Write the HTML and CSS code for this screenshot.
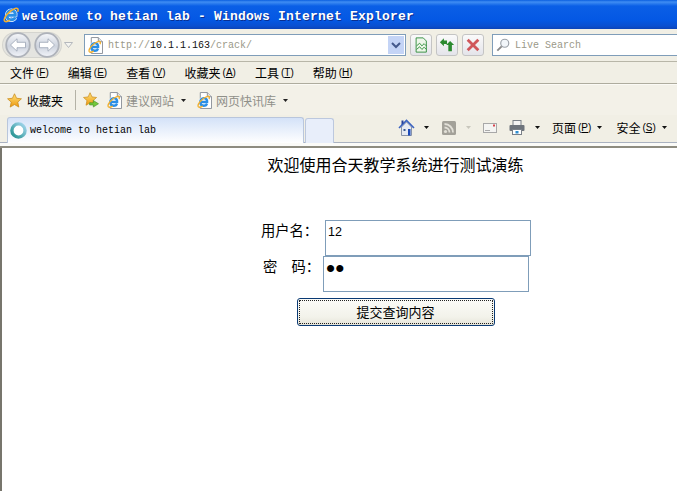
FILE: index.html
```html
<!DOCTYPE html>
<html lang="zh">
<head>
<meta charset="utf-8">
<title>welcome to hetian lab</title>
<link rel="stylesheet" href="styles.css">
</head>
<body>
<svg class="defs" width="0" height="0" aria-hidden="true">
  <defs>
    <linearGradient id="glass" x1="0" y1="0" x2="0" y2="1"><stop offset="0" stop-color="#f6f7fa"/><stop offset=".55" stop-color="#cdd3de"/><stop offset="1" stop-color="#f2f4f9"/></linearGradient>
    <linearGradient id="gold" x1="0" y1="0" x2="0" y2="1"><stop offset="0" stop-color="#ffe27a"/><stop offset="1" stop-color="#ee9a10"/></linearGradient>
    <linearGradient id="ring" x1="0" y1="1" x2="1" y2="0"><stop offset="0" stop-color="#1f8f8c"/><stop offset="1" stop-color="#a6d8f0"/></linearGradient>
    <symbol id="e" viewBox="0 0 24 24">
      <path d="M7 13H18.500C19 8.500 16 6 12.500 6C8.500 6 6 9.500 6 13.500C6 17.500 8.500 20 12.500 20C15 20 17 19 18.500 16.500" fill="none" stroke="#fff" stroke-width="6.200"/>
      <path d="M7 13H18.500C19 8.500 16 6 12.500 6C8.500 6 6 9.500 6 13.500C6 17.500 8.500 20 12.500 20C15 20 17 19 18.500 16.500" fill="none" stroke="#2a8ee6" stroke-width="4.400"/>
      <path d="M2.500 22C-.5 18 9 6 18 3C22 1.500 23.500 4 22 8M2.500 22C4.500 23.500 8 22 10.500 20.500" fill="none" stroke="#f2b030" stroke-width="2.400"/>
    </symbol>
    <symbol id="page-e" viewBox="0 0 16 18">
      <path d="M3.500 .5H11L15.500 5V17.500H3.500Z" fill="#fff" stroke="#8a8f98"/>
      <path d="M11 .5V5H15.500" fill="#dfe3ea" stroke="#8a8f98"/>
      <use href="#e" x="0" y="3" width="14" height="14"/>
    </symbol>
    <symbol id="star" viewBox="0 0 16 16">
      <path d="M8 .8L10.200 5.600L15.400 6.200L11.500 9.700L12.600 15L8 12.300L3.400 15L4.500 9.700L.6 6.200L5.800 5.600Z" fill="url(#gold)" stroke="#c98a18" stroke-width=".8"/>
    </symbol>
    <symbol id="caret" viewBox="0 0 5 3"><path d="M0 0H5L2.500 3Z" fill="currentColor"/></symbol>
  </defs>
</svg>

<header class="titlebar">
  <svg class="ico-title"><use href="#e"/></svg>
  <span class="title-text">welcome to hetian lab - Windows Internet Explorer</span>
</header>

<div class="addressbar">
  <div class="navpill">
    <svg class="nav" viewBox="0 0 26 26"><circle cx="13" cy="13" r="11.800" fill="url(#glass)" stroke="#aeb2ba" stroke-width="1.800"/><path d="M5.500 13L12 6.800V10.300H20.500V15.700H12V19.200Z" fill="#fff" stroke="#9aa3b4" stroke-width=".8"/></svg>
    <svg class="nav" viewBox="0 0 26 26"><circle cx="13" cy="13" r="11.800" fill="url(#glass)" stroke="#aeb2ba" stroke-width="1.800"/><path d="M20.500 13L14 6.800V10.300H5.500V15.700H14V19.200Z" fill="#fff" stroke="#9aa3b4" stroke-width=".8"/></svg>
  </div>
  <svg class="nav-drop" viewBox="0 0 9 6"><path d="M.5 .5H8.500L4.500 5.500Z" fill="#f4f4f0" stroke="#b5b8bd"/></svg>
  <div class="urlbox">
    <svg class="ico-page"><use href="#page-e"/></svg>
    <span class="url"><span class="dim">http://</span>10.1.1.163<span class="dim">/crack/</span></span>
    <span class="url-drop"><svg class="chev" viewBox="0 0 10 7"><path d="M1 1L5 5L9 1" fill="none" stroke="#44598c" stroke-width="2"/></svg></span>
  </div>
  <span class="toolbtn"><svg class="ico-btn" viewBox="0 0 16 18"><path d="M2.500 1H10.500L14 4.500V17H2.500Z" fill="#eef7ea" stroke="#2a8a36"/><path d="M3 10L6.500 7L9 10L11.500 7.500L14 10M3 14L6.500 11L9 14L11.500 11.500L14 14" fill="none" stroke="#2a8a36"/></svg></span>
  <span class="toolbtn"><svg class="ico-btn" viewBox="0 0 18 18"><path d="M1 6L5.500 1.500V4H9V8H5.500V10.500Z" fill="#2b8a2f"/><path d="M17 9L12.500 4.500L8 9H10.500V16H14.500V9Z" fill="#2b8a2f"/></svg></span>
  <span class="toolbtn"><svg class="ico-btn" viewBox="0 0 18 18"><path d="M3 3L15 15M15 3L3 15" stroke="#d0565a" stroke-width="3.200"/></svg></span>
  <div class="searchbox">
    <svg class="ico-search" viewBox="0 0 16 16"><circle cx="10" cy="6" r="4.600" fill="#f2f6fa" stroke="#9aa0a8" stroke-width="1.300"/><path d="M6.500 9.500L1.500 14.500" stroke="#8a8a8a" stroke-width="2.200"/></svg>
    <span class="search-text">Live Search</span>
  </div>
</div>

<nav class="menubar">
  <span class="menu">文件<span class="key">(<u>F</u>)</span></span>
  <span class="menu">编辑<span class="key">(<u>E</u>)</span></span>
  <span class="menu">查看<span class="key">(<u>V</u>)</span></span>
  <span class="menu">收藏夹<span class="key">(<u>A</u>)</span></span>
  <span class="menu">工具<span class="key">(<u>T</u>)</span></span>
  <span class="menu">帮助<span class="key">(<u>H</u>)</span></span>
</nav>

<div class="favbar">
  <span class="fav fav-main"><svg class="ico-star"><use href="#star"/></svg>收藏夹</span>
  <span class="sep"></span>
  <svg class="ico-star-add" viewBox="0 0 17 17"><use href="#star" width="15" height="15"/><path d="M7 11.500H11V9L16.500 12.500L11 16V13.800H7Z" fill="#74c83c" stroke="#3d8a20" stroke-width=".6"/></svg>
  <span class="fav fav-gray"><svg class="ico-page"><use href="#page-e"/></svg>建议网站<svg class="caret"><use href="#caret"/></svg></span>
  <span class="fav fav-gray"><svg class="ico-page"><use href="#page-e"/></svg>网页快讯库<svg class="caret"><use href="#caret"/></svg></span>
</div>

<div class="tabbar">
  <div class="tab">
    <svg class="ico-ring" viewBox="0 0 16 16"><circle cx="8" cy="8" r="6.200" fill="#fff" stroke="url(#ring)" stroke-width="3.200"/></svg>
    <span class="tab-text">welcome to hetian lab</span>
  </div>
  <div class="newtab"></div>
  <div class="commands">
    <svg class="ico-home" viewBox="0 0 16 17"><path d="M3 8V16.500H13V8L8 3Z" fill="#e6eaf2" stroke="#8a94a8"/><path d="M.5 9L8 1.500L15.500 9" fill="none" stroke="#3a62c0" stroke-width="1.600"/><path d="M3 1.500H5V4L3 6Z" fill="#24409a"/><rect x="5" y="10" width="2" height="2" fill="#3a5a90"/><rect x="9.500" y="10" width="2.500" height="6.500" fill="#1c4ab8"/></svg>
    <svg class="caret c1"><use href="#caret"/></svg>
    <svg class="ico-rss" viewBox="0 0 14 14"><rect width="14" height="14" rx="1.500" fill="#a3a199"/><circle cx="3.500" cy="10.500" r="1.600" fill="#e2e0d8"/><path d="M2.500 6.500A5 5 0 0 1 7.500 11.500M2.500 3A8.500 8.500 0 0 1 11 11.500" fill="none" stroke="#e2e0d8" stroke-width="1.800"/></svg>
    <svg class="caret c2"><use href="#caret"/></svg>
    <svg class="ico-mail" viewBox="0 0 14 10"><rect x=".5" y=".5" width="13" height="9" fill="#f4f4f2" stroke="#a8a8a8"/><path d="M2 7.500H7" stroke="#aaa"/><rect x="10" y="1.500" width="2" height="2" fill="#d8444c"/></svg>
    <svg class="ico-print" viewBox="0 0 16 15"><rect x="4" y=".5" width="8" height="5" fill="#f4f4f4" stroke="#7a8088"/><rect x=".5" y="5" width="15" height="6" rx="1" fill="#6e747c"/><rect x="3.500" y="9.500" width="9" height="5" fill="#fff" stroke="#7a8088"/><rect x="6.500" y="11" width="3" height="2.500" fill="#2f8ed0"/></svg>
    <svg class="caret c3"><use href="#caret"/></svg>
    <span class="cmd">页面<span class="key">(<u>P</u>)</span><svg class="caret"><use href="#caret"/></svg></span>
    <span class="cmd">安全<span class="key">(<u>S</u>)</span><svg class="caret"><use href="#caret"/></svg></span>
  </div>
</div>

<main class="page">
  <h1 class="heading">欢迎使用合天教学系统进行测试演练</h1>
  <form class="login">
    <label class="row row-user">用户名：<input class="field" type="text" value="12"></label>
    <label class="row row-pass">密　码：<input class="field field-pass" type="password" value="12"></label>
    <button class="submit" type="button">提交查询内容</button>
  </form>
</main>
</body>
</html>
```

FILE: styles.css
```css
* { box-sizing: border-box; }

html, body {
  margin: 0;
  height: 100%;
  overflow: hidden;
}

body {
  display: flex;
  flex-direction: column;
  background: #f1efe5;
  color: #000;
  font: 12px "Noto Sans CJK SC", "Liberation Sans", sans-serif;
}

svg { display: block; flex: none; }
.defs { position: absolute; }

.titlebar {
  height: 29px;
  flex: none;
  display: flex;
  align-items: center;
  padding-left: 3px;
  background: linear-gradient(#0a5fe0 0, #3f8df3 2px, #0a5fe6 6px, #0458e4 20px, #0a4fd0 26px, #0c44b8 29px);
}

.ico-title { width: 16px; height: 17px; margin-right: 3px; }

.title-text {
  margin-top: 4px;
  color: #fff;
  font: bold 13px "Liberation Mono", monospace;
  letter-spacing: .2px;
  text-shadow: 1px 1px 0 #0a2f90;
  white-space: nowrap;
}

.addressbar {
  height: 33px;
  flex: none;
  display: flex;
  align-items: center;
  padding-left: 3px;
  border-bottom: 1px solid #b8b6a8;
}

.navpill {
  width: 58px;
  height: 24px;
  display: flex;
  align-items: center;
  justify-content: space-between;
  padding: 0 1px 0 2px;
  border-radius: 12px;
  background: #e4e4e0;
  box-shadow: 0 0 0 1px #d4d4cf;
  gap: 2px;
}

.nav { width: 26px; height: 26px; }
.nav-drop { width: 9px; height: 6px; margin: 0 11px 0 3px; }

.urlbox {
  width: 322px;
  height: 22px;
  display: flex;
  align-items: center;
  padding: 0 1px 0 3px;
  background: #fff;
  border: 1px solid #7f9db9;
}

.ico-page { width: 15px; height: 17px; }

.url {
  flex: 1;
  padding-left: 5px;
  font: 10px "Liberation Mono", monospace;
  color: #111;
}

.dim, .search-text { color: #9a9888; }

.url-drop {
  width: 16px;
  height: 18px;
  display: flex;
  align-items: center;
  justify-content: center;
  background: #c4d4f6;
}

.chev { width: 10px; height: 7px; }

.toolbtn {
  width: 22px;
  height: 22px;
  margin-left: 4px;
  display: flex;
  align-items: center;
  justify-content: center;
  border: 1px solid #c4c4c4;
  border-radius: 3px;
  background: linear-gradient(#fafafa, #e4e4ea);
}

.ico-btn { width: 16px; height: 16px; }

.searchbox {
  flex: 1;
  height: 22px;
  margin-left: 8px;
  display: flex;
  align-items: center;
  gap: 5px;
  padding-left: 3px;
  background: #fff;
  border: 1px solid #7f9db9;
  border-right: 0;
}

.ico-search { width: 14px; height: 16px; }
.search-text { font: 10px "Liberation Mono", monospace; }

.menubar {
  height: 22px;
  flex: none;
  display: flex;
  align-items: center;
  gap: 19px;
  padding-left: 10px;
  border-bottom: 1px solid #aeac9e;
}

.menu, .cmd {
  display: flex;
  align-items: center;
  white-space: nowrap;
  line-height: 16px;
}

.key {
  margin-left: 2px;
  font: 10px "Liberation Sans", sans-serif;
}

.favbar {
  height: 31px;
  flex: none;
  display: flex;
  align-items: center;
  padding-left: 7px;
  border-top: 1px solid #fbfaf5;
  background: #f3f1e8;
}

.fav {
  display: flex;
  align-items: center;
  white-space: nowrap;
}

.fav-main { gap: 5px; }
.fav-gray { gap: 4px; color: #8f8f88; }
.fav-gray + .fav-gray { margin-left: 11px; }
.fav-gray .caret { margin-left: 3px; color: #222; }
.ico-star { width: 15px; height: 15px; }
.sep { width: 1px; height: 20px; margin: 0 7px 0 12px; background: #b4b2a6; }
.ico-star-add { width: 16px; height: 16px; margin-right: 8px; }

.caret { width: 5px; height: 3px; color: #111; }

.tabbar {
  height: 33px;
  flex: none;
  display: flex;
  align-items: flex-end;
  padding: 0 0 3px 7px;
  border-bottom: 2px solid #8e8c80;
  box-shadow: inset 0 -3px 0 #fbfbf8, inset 0 -4px 0 #aab2c0;
}

.tab {
  width: 297px;
  height: 26px;
  display: flex;
  align-items: center;
  padding-left: 2px;
  border: 1px solid #b9c6dc;
  border-bottom: 0;
  border-radius: 3px 3px 0 0;
  background: linear-gradient(#d4e2f8, #fff);
}

.ico-ring { width: 17px; height: 17px; margin-right: 3px; }
.tab-text { font: 10px "Liberation Mono", monospace; white-space: nowrap; }

.newtab {
  width: 29px;
  height: 25px;
  margin-left: 1px;
  border: 1px solid #bcc8de;
  border-bottom: 0;
  border-radius: 3px 3px 0 0;
  background: #e8eefa;
}

.commands {
  flex: 1;
  height: 28px;
  display: flex;
  align-items: center;
  padding: 0 0 3px 64px;
}

.ico-home { width: 17px; height: 17px; }
.c1 { margin-left: 9px; }
.ico-rss { width: 14px; height: 14px; margin-left: 13px; }
.c2 { margin-left: 10px; color: #c8c6bc; }
.ico-mail { width: 14px; height: 10px; margin-left: 12px; }
.ico-print { width: 16px; height: 15px; margin-left: 12px; }
.c3 { margin-left: 10px; }
.cmd { margin-left: 17px; }
.c3 + .cmd { margin-left: 12px; }
.cmd .caret { margin-left: 6px; }
.cmd + .cmd { margin-left: 14px; }

.page {
  flex: 1;
  padding-left: 113px;
  background: #fff;
  border-left: 2px solid #77756c;
  font-size: 14.300px;
}

.heading {
  margin: 6px 0 0;
  padding-right: 1px;
  font-size: 16px;
  font-weight: 400;
  line-height: 20px;
  text-align: center;
  white-space: nowrap;
}

.login {
  display: flex;
  flex-direction: column;
  align-items: center;
  margin-top: 46px;
}

.row {
  display: flex;
  align-items: flex-start;
  line-height: 20px;
  white-space: nowrap;
}

.row-user { gap: 7px; }
.row-pass { gap: 3px; }

.field {
  width: 206px;
  height: 36px;
  margin: 0;
  padding: 0 2px 12px;
  border: 1px solid #7f9db9;
  border-radius: 0;
  outline: 0;
  background: #fff;
  font: 12.500px "Liberation Sans", sans-serif;
  color: #000;
}

.field-pass { font-size: 26px; padding-bottom: 12px; }

.submit {
  width: 198px;
  height: 28px;
  margin: 6px 1px 0 0;
  padding: 0 0 2px;
  border: 1px solid #0a3a74;
  border-radius: 3px;
  outline: 1px dotted #222;
  outline-offset: -3px;
  background: linear-gradient(#fbfbf8, #f2f2ea 70%, #e6e4d8);
  font: 13px "Noto Sans CJK SC", sans-serif;
  color: #000;
}
```
